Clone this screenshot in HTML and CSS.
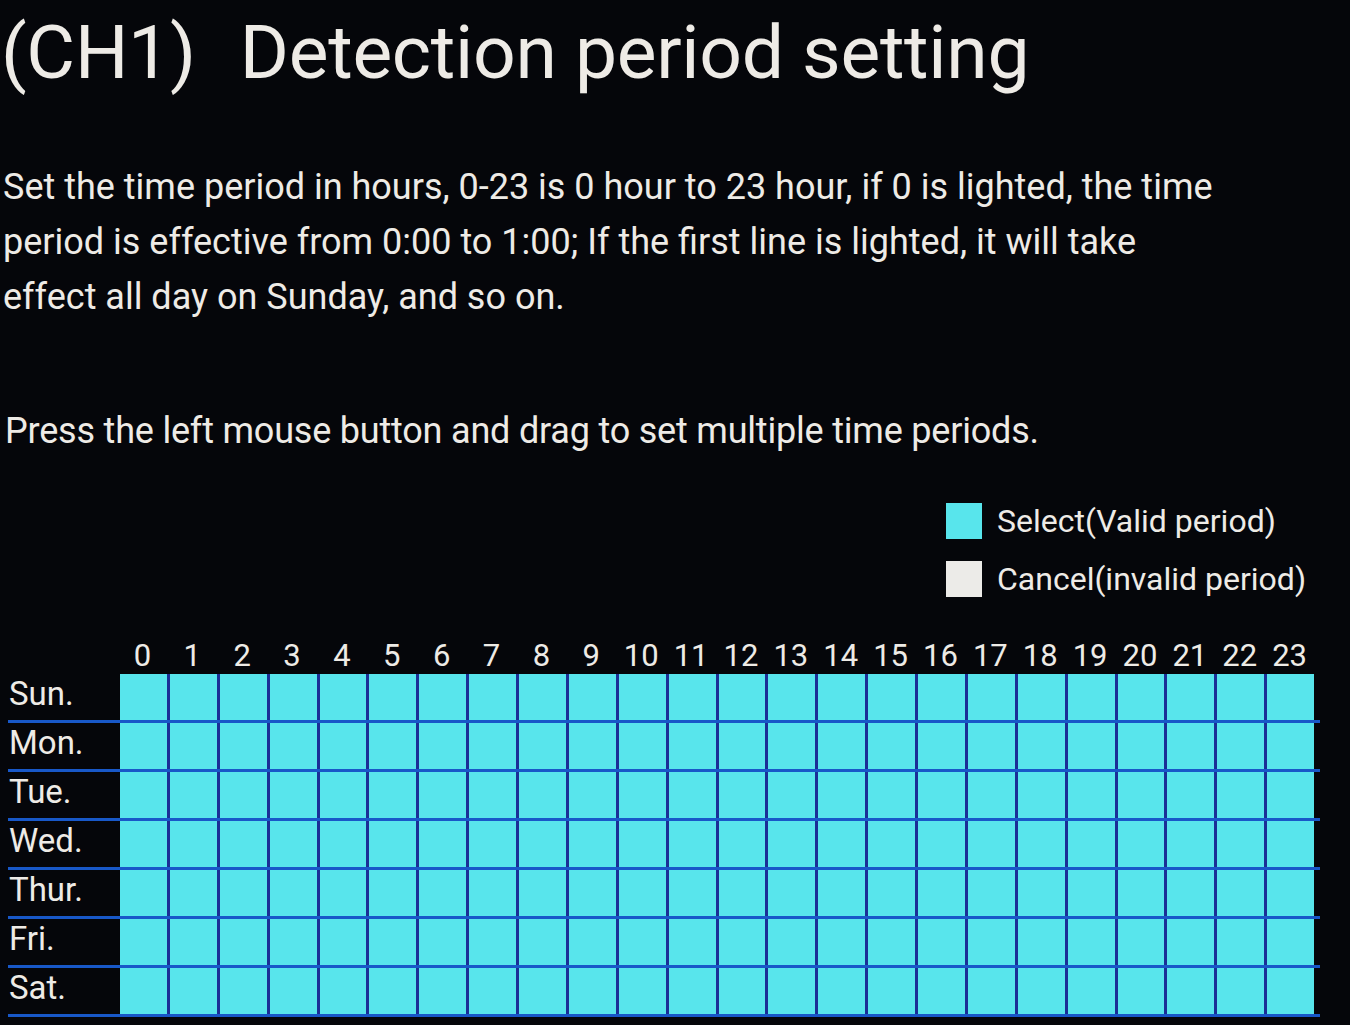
FILE: index.html
```html
<!DOCTYPE html>
<html>
<head>
<meta charset="utf-8">
<link rel="stylesheet" href="styles.css">
</head>
<body>
<div class="page">
  <h1 class="title"><span>(CH1)</span><span class="title-main">Detection period setting</span></h1>
  <p class="desc">Set the time period in hours, 0-23 is 0 hour to 23 hour, if 0 is lighted, the time<br>period is effective from 0:00 to 1:00; If the first line is lighted, it will take<br>effect all day on Sunday, and so on.</p>
  <p class="hint">Press the left mouse button and drag to set multiple time periods.</p>
  <div class="legend">
    <div class="legend-item"><span class="swatch swatch-on"></span><span>Select(Valid period)</span></div>
    <div class="legend-item"><span class="swatch swatch-off"></span><span>Cancel(invalid period)</span></div>
  </div>
  <div class="schedule">
    <div class="hours">
      <span class="hours-spacer"></span>
      <div class="hour-labels">
        <span>0</span><span>1</span><span>2</span><span>3</span><span>4</span><span>5</span><span>6</span><span>7</span><span>8</span><span>9</span><span>10</span><span>11</span><span>12</span><span>13</span><span>14</span><span>15</span><span>16</span><span>17</span><span>18</span><span>19</span><span>20</span><span>21</span><span>22</span><span>23</span>
      </div>
    </div>
    <div class="day-row"><span class="day">Sun.</span><div class="cells"><i></i><i></i><i></i><i></i><i></i><i></i><i></i><i></i><i></i><i></i><i></i><i></i><i></i><i></i><i></i><i></i><i></i><i></i><i></i><i></i><i></i><i></i><i></i><i></i></div></div>
    <div class="day-row"><span class="day">Mon.</span><div class="cells"><i></i><i></i><i></i><i></i><i></i><i></i><i></i><i></i><i></i><i></i><i></i><i></i><i></i><i></i><i></i><i></i><i></i><i></i><i></i><i></i><i></i><i></i><i></i><i></i></div></div>
    <div class="day-row"><span class="day">Tue.</span><div class="cells"><i></i><i></i><i></i><i></i><i></i><i></i><i></i><i></i><i></i><i></i><i></i><i></i><i></i><i></i><i></i><i></i><i></i><i></i><i></i><i></i><i></i><i></i><i></i><i></i></div></div>
    <div class="day-row"><span class="day">Wed.</span><div class="cells"><i></i><i></i><i></i><i></i><i></i><i></i><i></i><i></i><i></i><i></i><i></i><i></i><i></i><i></i><i></i><i></i><i></i><i></i><i></i><i></i><i></i><i></i><i></i><i></i></div></div>
    <div class="day-row"><span class="day">Thur.</span><div class="cells"><i></i><i></i><i></i><i></i><i></i><i></i><i></i><i></i><i></i><i></i><i></i><i></i><i></i><i></i><i></i><i></i><i></i><i></i><i></i><i></i><i></i><i></i><i></i><i></i></div></div>
    <div class="day-row"><span class="day">Fri.</span><div class="cells"><i></i><i></i><i></i><i></i><i></i><i></i><i></i><i></i><i></i><i></i><i></i><i></i><i></i><i></i><i></i><i></i><i></i><i></i><i></i><i></i><i></i><i></i><i></i><i></i></div></div>
    <div class="day-row"><span class="day">Sat.</span><div class="cells"><i></i><i></i><i></i><i></i><i></i><i></i><i></i><i></i><i></i><i></i><i></i><i></i><i></i><i></i><i></i><i></i><i></i><i></i><i></i><i></i><i></i><i></i><i></i><i></i></div></div>
  </div>
</div>
</body>
</html>
```
FILE: styles.css
```css
html, body {
  margin: 0;
  padding: 0;
  background: #05060a;
}
.page {
  width: 1350px;
  height: 1025px;
  overflow: hidden;
  color: #eeebe6;
  font-family: Roboto, "Liberation Sans", sans-serif;
}
.title {
  margin: 0;
  padding: 2px 0 0 1px;
  font-size: 75px;
  font-weight: 400;
  line-height: 100px;
  letter-spacing: -0.3px;
}
.title-main {
  margin-left: 44px;
}
.desc {
  margin: 58px 0 0 3px;
  font-size: 36px;
  line-height: 55px;
}
.hint {
  margin: 79px 0 0 5px;
  font-size: 36px;
  line-height: 55px;
  letter-spacing: -0.2px;
}
.legend {
  display: flex;
  flex-direction: column;
  gap: 22px;
  margin: 44px 0 0 946px;
}
.legend-item {
  display: flex;
  align-items: center;
  gap: 15px;
  font-size: 32px;
  line-height: 36px;
}
.swatch {
  width: 36px;
  height: 36px;
  flex: none;
}
.swatch-on { background: #58e5ec; }
.swatch-off { background: #ecebe8; }
.schedule {
  margin: 40px 0 0 8px;
  width: 1312px;
}
.hours {
  display: flex;
  height: 37px;
  align-items: center;
}
.hours-spacer {
  width: 111px;
  flex: none;
}
.hour-labels {
  display: grid;
  grid-template-columns: repeat(24, 1fr);
  column-gap: 3px;
  width: 1194px;
  font-size: 31px;
  text-align: center;
}
.day-row {
  display: flex;
  align-items: stretch;
  height: 46px;
  border-bottom: 3px solid #1858c8;
}
.day {
  width: 111px;
  flex: none;
  padding-left: 1px;
  font-size: 33px;
  line-height: 40px;
}
.cells {
  display: grid;
  grid-template-columns: repeat(24, 1fr);
  column-gap: 3px;
  width: 1194px;
  background: #1b2f96;
}
.cells i {
  display: block;
  background: #58e5ec;
}
```
